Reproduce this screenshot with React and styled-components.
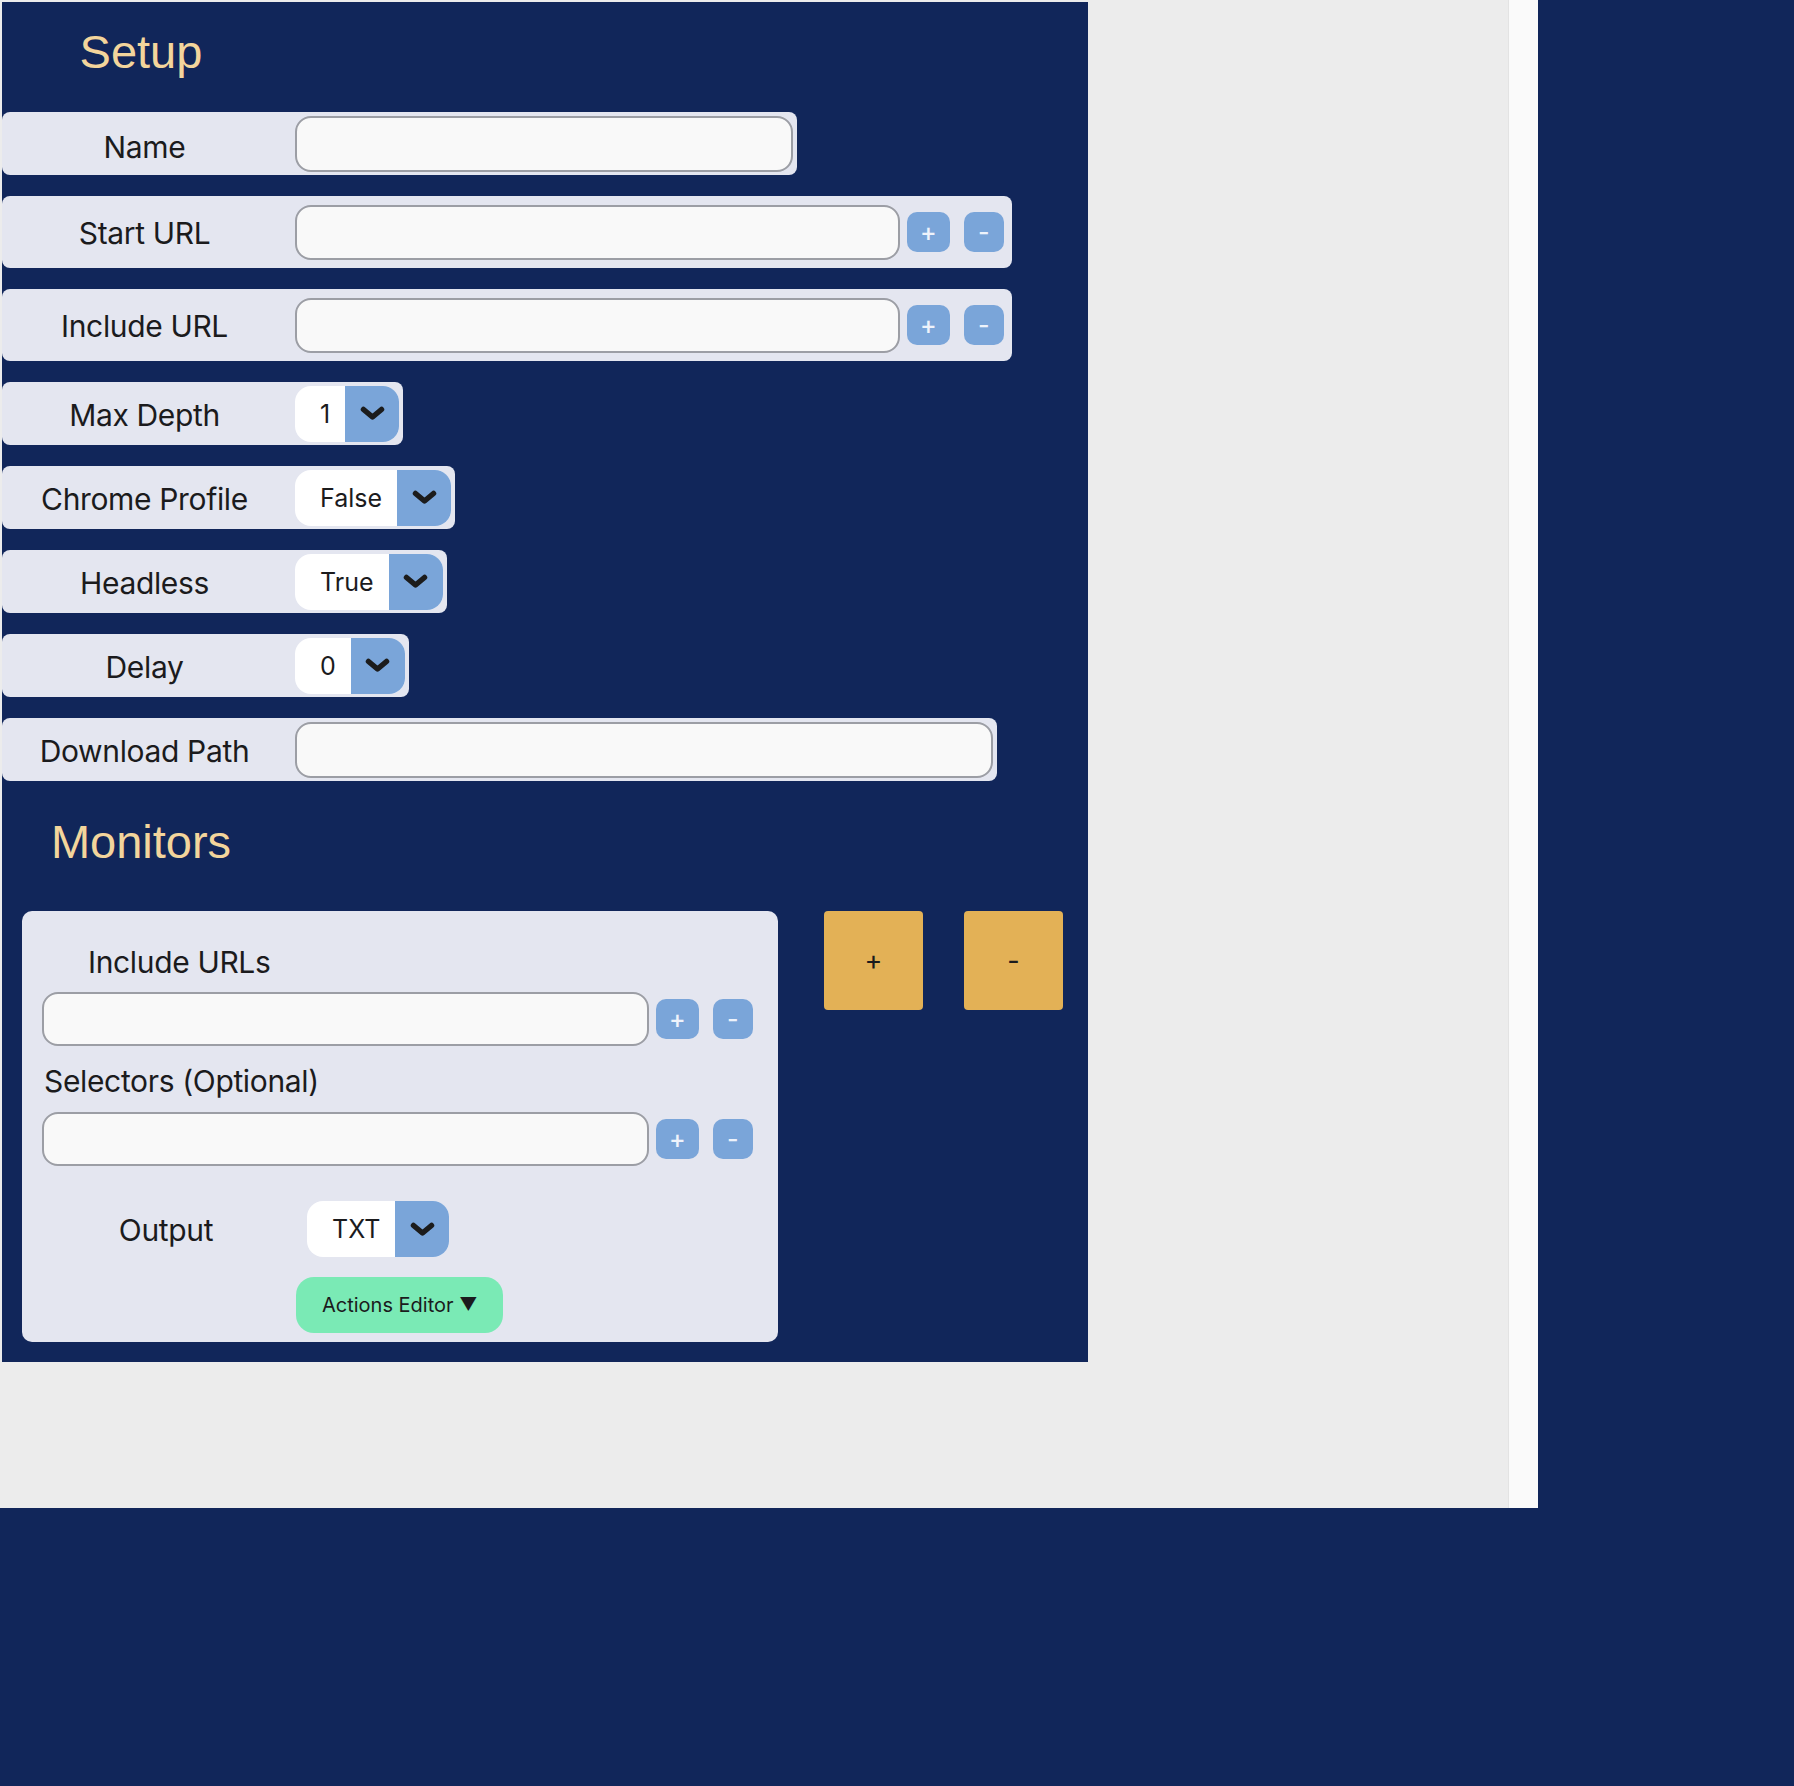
import React from 'react';
import styled, { createGlobalStyle } from 'styled-components';

const GlobalStyle = createGlobalStyle`
  body {
    margin: 0;
    background: #11265a;
    font-family: 'Inter', 'Noto Sans', sans-serif;
    color: #1b1b1d;
  }
`;

const Frame = styled.div`
  display: flex;
  width: 1538px;
  height: 1508px;
  background: #ececec;
`;

const ScrollArea = styled.div`
  flex: 1;
  padding: 2px 0 0 2px;
  overflow: hidden;
`;

const ScrollTrack = styled.div`
  width: 29px;
  background: #fafafa;
  border-left: 1px solid #e3e3e3;
`;

const Panel = styled.div`
  display: flow-root;
  width: 1086px;
  background: #11265a;
  padding-bottom: 20px;
  box-sizing: border-box;
`;

const Heading = styled.h2`
  width: 278px;
  margin: ${(p) => p.$top}px 0 ${(p) => p.$bottom}px 0;
  text-align: center;
  font-family: 'Liberation Sans', Arial, sans-serif;
  font-weight: 400;
  font-size: 47px;
  line-height: 54px;
  color: #f3d59c;
`;

const Rows = styled.div`
  display: flex;
  flex-direction: column;
  align-items: flex-start;
  gap: 21px;
`;

const Row = styled.div`
  display: flex;
  align-items: center;
  height: ${(p) => (p.$tall ? 72 : 63)}px;
  padding-right: ${(p) => (p.$tall ? 1 : 4)}px;
  background: #e4e6f0;
  border-radius: 8px;
  box-sizing: border-box;
`;

const Label = styled.div`
  width: 285px;
  margin-right: 8px;
  padding-top: ${(p) => p.$shift || 2}px;
  text-align: center;
  font-size: 30px;
  letter-spacing: -0.35px;
`;

const TextInput = styled.div`
  flex-shrink: 0;
  width: ${(p) => p.$w}px;
  height: ${(p) => p.$h || 56}px;
  box-sizing: border-box;
  border: 2px solid #9c9ea5;
  border-radius: 16px;
  background: #f9f9f9;
`;

const SmallButton = styled.button`
  flex-shrink: 0;
  min-width: 40px;
  height: 40px;
  margin: 0 7px;
  padding: 0 13px;
  border: none;
  border-radius: 10px;
  background: #7aa5d9;
  color: #eef3fb;
  font-family: 'Inter', sans-serif;
  font-size: 25px;
  font-weight: 500;
  line-height: 40px;
`;

const SelectBox = styled.div`
  display: flex;
  height: 56px;
  border-radius: 16px;
  overflow: hidden;
  background: #ffffff;
`;

const SelectValue = styled.span`
  display: flex;
  align-items: center;
  padding: 0 15px 0 25px;
  font-size: 25px;
`;

const SelectArrow = styled.span`
  display: flex;
  align-items: center;
  justify-content: center;
  width: 54px;
  background: #7aa5d9;
`;

const Chevron = () => (
  <svg width="25" height="15" viewBox="0 0 25 15">
    <polyline
      points="3.5,3.5 12.5,11 21.5,3.5"
      fill="none"
      stroke="#1c1c1c"
      strokeWidth="5.5"
      strokeLinecap="round"
      strokeLinejoin="round"
    />
  </svg>
);

const Select = ({ value }) => (
  <SelectBox>
    <SelectValue>{value}</SelectValue>
    <SelectArrow>
      <Chevron />
    </SelectArrow>
  </SelectBox>
);

const MonitorSection = styled.div`
  display: flex;
  align-items: flex-start;
  padding-left: 20px;
`;

const Card = styled.div`
  width: 756px;
  box-sizing: border-box;
  padding: 33px 20px 9px 20px;
  background: #e4e6f0;
  border-radius: 10px;
`;

const CardLabel = styled.div`
  padding-left: ${(p) => p.$indent || 0}px;
  margin: ${(p) => p.$top || 0}px 0 ${(p) => p.$bottom || 0}px 0;
  font-size: 30px;
  line-height: 36px;
  letter-spacing: -0.35px;
`;

const InputRow = styled.div`
  display: flex;
  align-items: center;
`;

const OutputRow = styled.div`
  display: flex;
  align-items: center;
  margin-top: 35px;
`;

const OutputLabel = styled.div`
  width: 248px;
  margin-right: 17px;
  padding-top: 2px;
  text-align: center;
  font-size: 30px;
  letter-spacing: -0.35px;
`;

const ActionsButton = styled.button`
  display: block;
  height: 56px;
  margin: 20px 0 0 254px;
  padding: 0 26px;
  border: none;
  border-radius: 18px;
  background: #7aeab5;
  color: #1b1b1d;
  font-family: 'Inter', 'DejaVu Sans', sans-serif;
  font-size: 20px;
`;

const Caret = styled.span`
  font-size: 18px;
  vertical-align: 1px;
`;

const BigButtons = styled.div`
  display: flex;
  gap: 41px;
  margin-left: 46px;
`;

const BigButton = styled.button`
  width: 99px;
  height: 99px;
  border: none;
  border-radius: 4px;
  background: #e3b156;
  color: #1b1b1d;
  font-family: 'Inter', sans-serif;
  font-size: 27px;
`;

const PlusMinus = () => (
  <>
    <SmallButton>+</SmallButton>
    <SmallButton>-</SmallButton>
  </>
);

export default function App() {
  return (
    <>
      <GlobalStyle />
      <Frame>
        <ScrollArea>
          <Panel>
            <Heading $top={23} $bottom={33}>Setup</Heading>
            <Rows>
              <Row>
                <Label $shift={6}>Name</Label>
                <TextInput $w={498} />
              </Row>
              <Row $tall>
                <Label>Start URL</Label>
                <TextInput $w={605} $h={55} />
                <PlusMinus />
              </Row>
              <Row $tall>
                <Label>Include URL</Label>
                <TextInput $w={605} $h={55} />
                <PlusMinus />
              </Row>
              <Row>
                <Label>Max Depth</Label>
                <Select value="1" />
              </Row>
              <Row>
                <Label>Chrome Profile</Label>
                <Select value="False" />
              </Row>
              <Row>
                <Label>Headless</Label>
                <Select value="True" />
              </Row>
              <Row>
                <Label>Delay</Label>
                <Select value="0" />
              </Row>
              <Row>
                <Label>Download Path</Label>
                <TextInput $w={698} />
              </Row>
            </Rows>
            <Heading $top={34} $bottom={42}>Monitors</Heading>
            <MonitorSection>
              <Card>
                <CardLabel $indent={46} $bottom={12}>Include URLs</CardLabel>
                <InputRow>
                  <TextInput $w={607} $h={54} />
                  <PlusMinus />
                </InputRow>
                <CardLabel $indent={2} $top={17} $bottom={13}>Selectors (Optional)</CardLabel>
                <InputRow>
                  <TextInput $w={607} $h={54} />
                  <PlusMinus />
                </InputRow>
                <OutputRow>
                  <OutputLabel>Output</OutputLabel>
                  <Select value="TXT" />
                </OutputRow>
                <ActionsButton>
                  Actions Editor <Caret>▼</Caret>
                </ActionsButton>
              </Card>
              <BigButtons>
                <BigButton>+</BigButton>
                <BigButton>-</BigButton>
              </BigButtons>
            </MonitorSection>
          </Panel>
        </ScrollArea>
        <ScrollTrack />
      </Frame>
    </>
  );
}
